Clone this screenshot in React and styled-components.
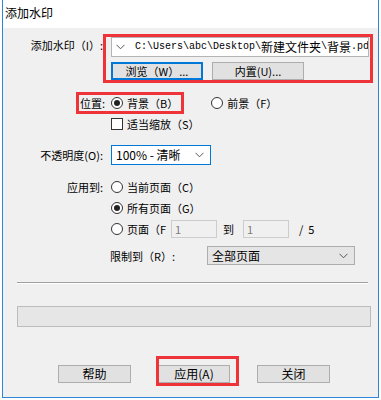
import React from 'react';
import styled, { createGlobalStyle } from 'styled-components';

const GlobalStyle = createGlobalStyle`
  html, body {
    margin: 0;
    padding: 0;
    background: #ffffff;
  }
  * {
    box-sizing: border-box;
  }
`;

const Page = styled.div`
  width: 381px;
  height: 400px;
  padding: 0 2px;
  background: #ffffff;
  font-family: "Noto Sans CJK SC", "Noto Sans", sans-serif;
  font-size: 11px;
  color: #000;
`;

const Window = styled.div`
  width: 377px;
  height: 398px;
  border: 1px solid #2b88d8;
  border-top: none;
  display: flex;
  flex-direction: column;
`;

const TitleBar = styled.div`
  height: 28px;
  flex: none;
  background: #ffffff;
  display: flex;
  align-items: center;
  padding: 0 0 2px 2px;
  font-size: 12px;
  line-height: 14px;
`;

const Body = styled.div`
  flex: 1;
  background: #f0f0f0;
  display: flex;
  flex-direction: column;
`;

const Row = styled.div`
  display: flex;
  align-items: ${p => p.$align || 'center'};
  margin-top: ${p => p.$top || 0}px;
  padding-left: ${p => p.$indent || 0}px;
  height: ${p => (p.$h ? `${p.$h}px` : 'auto')};
  line-height: 16px;
  white-space: nowrap;
`;

const Label = styled.div`
  width: ${p => p.$w || 100}px;
  flex: none;
  text-align: ${p => p.$left ? 'left' : 'right'};
  padding-top: ${p => p.$pt || 0}px;
  line-height: 16px;
  margin-right: ${p => p.$mr || 0}px;
`;

const Mark = styled.div`
  border: 3px solid #ee3339;
  padding: ${p => p.$pad};
  flex: none;
`;

const MarkedBox = styled(Mark)`
  width: 270px;
`;

const Combo = styled.div`
  width: 258px;
  height: 20px;
  background: #ffffff;
  border: 1px solid #b4b4b4;
  display: flex;
  align-items: center;
  padding-left: 4px;
  overflow: hidden;
  white-space: nowrap;
`;

const ComboArrow = styled.svg`
  width: 9px;
  height: 6px;
  flex: none;
  margin-right: 10px;
`;

const Mono = styled.span`
  font-family: "Liberation Mono", monospace;
  font-size: 10px;
`;

const Wide = styled.span`
  font-size: 12px;
`;

const ButtonRow = styled.div`
  display: flex;
  gap: ${p => p.$gap || 9}px;
  margin-top: 5px;
`;

const Button = styled.div`
  position: relative;
  width: ${p => p.$w || 92}px;
  height: 18px;
  flex: none;
  background: #e1e1e1;
  border: ${p => p.$focus ? '2px solid #0078d7' : '1px solid #adadad'};
  display: flex;
  align-items: center;
  justify-content: center;
  line-height: 14px;
  font-size: ${p => p.$fs || 11}px;
  ${p => p.$marked && `
    &::after {
      content: '';
      position: absolute;
      top: -10px;
      left: -3px;
      right: -10px;
      bottom: -4px;
      border: 3px solid #ee3339;
    }
  `}
`;

const Choice = styled.div`
  display: flex;
  align-items: center;
  flex: none;
  margin-left: ${p => p.$ml || 0}px;
`;

const Radio = styled.span`
  width: 12px;
  height: 12px;
  border-radius: 50%;
  border: 1px solid #333333;
  background: #ffffff;
  flex: none;
  display: flex;
  align-items: center;
  justify-content: center;
  margin-right: 4px;
  &::after {
    content: '';
    width: 6px;
    height: 6px;
    border-radius: 50%;
    background: ${p => p.$on ? '#222222' : 'transparent'};
  }
`;

const Check = styled.span`
  width: 12px;
  height: 12px;
  border: 1px solid #333333;
  background: #ffffff;
  flex: none;
  margin-right: 4px;
`;

const Select = styled.div`
  width: ${p => p.$w}px;
  height: ${p => p.$h || 20}px;
  flex: none;
  background: ${p => p.$gray ? '#e5e5e5' : '#ffffff'};
  border: 1px solid ${p => p.$gray ? '#adadad' : '#0078d7'};
  display: flex;
  align-items: center;
  justify-content: space-between;
  padding: 0 6px 0 4px;
  font-size: 12px;
`;

const Field = styled.div`
  width: 46px;
  height: 18px;
  flex: none;
  border: 1px solid #cccccc;
  background: #f0f0f0;
  color: #7a7a7a;
  padding-left: 3px;
  display: flex;
  align-items: center;
`;

const Clip = styled.span`
  width: ${p => p.$w}px;
  overflow: hidden;
  flex: none;
`;

const Text = styled.span`
  margin: ${p => p.$m || '0'};
  flex: none;
`;

const Separator = styled.div`
  margin: ${p => p.$top}px 0 0 14px;
  width: 351px;
  height: 2px;
  border-top: 1px solid #a0a0a0;
  border-bottom: 1px solid #ffffff;
`;

const Progress = styled.div`
  margin: 22px 0 0 14px;
  width: 354px;
  height: 21px;
  background: #e6e6e6;
  border: 1px solid #bcbcbc;
`;

const Footer = styled.div`
  display: flex;
  align-items: flex-start;
  gap: 27px;
  padding-left: 55px;
  margin-top: 38px;
`;

const DropArrow = styled(ComboArrow)`
  margin-right: 0;
`;

const Chevron = ({ as }) => (
  <ComboArrow as={as} viewBox="0 0 9 6">
    <path d="M0.5 0.8 L4.5 4.8 L8.5 0.8" fill="none" stroke="#555" strokeWidth="1" />
  </ComboArrow>
);

const DropChevron = () => (
  <DropArrow viewBox="0 0 9 6">
    <path d="M0.5 0.8 L4.5 4.8 L8.5 0.8" fill="none" stroke="#555" strokeWidth="1" />
  </DropArrow>
);

export default function App() {
  return (
    <>
      <GlobalStyle />
      <Page>
        <Window>
          <TitleBar>添加水印</TitleBar>
          <Body>
            <Row $align="flex-start" $top={6}>
              <Label $pt={3}>添加水印（I）:</Label>
              <MarkedBox $pad="0 1px 0 5px">
                <Combo>
                  <Chevron />
                  <Mono>{'C:\\Users\\abc\\Desktop\\'}</Mono>
                  <Wide>新建文件夹</Wide>
                  <Mono>{'\\'}</Mono>
                  <Wide>背景</Wide>
                  <Mono>.pdf</Mono>
                </Combo>
                <ButtonRow>
                  <Button $focus>浏览（W）...</Button>
                  <Button>内置(U)...</Button>
                </ButtonRow>
              </MarkedBox>
            </Row>

            <Row $top={9} $indent={73}>
              <Mark $pad="0 3px 0 1px">
                <Row $h={16}>
                  <Label $w={31} $left>位置:</Label>
                  <Choice>
                    <Radio $on />
                    背景（B）
                  </Choice>
                </Row>
              </Mark>
              <Choice $ml={27}>
                <Radio />
                前景（F）
              </Choice>
            </Row>

            <Row $top={3} $indent={108} $h={14}>
              <Choice>
                <Check />
                适当缩放（S）
              </Choice>
            </Row>

            <Row $top={14}>
              <Label $mr={8}>不透明度(O):</Label>
              <Select $w={100}>
                100% - 清晰
                <DropChevron />
              </Select>
            </Row>

            <Row $top={14} $h={16}>
              <Label $mr={8}>应用到:</Label>
              <Choice>
                <Radio />
                当前页面（C）
              </Choice>
            </Row>

            <Row $top={5} $indent={108} $h={16}>
              <Choice>
                <Radio $on />
                所有页面（G）
              </Choice>
            </Row>

            <Row $top={4} $indent={108} $h={18}>
              <Choice>
                <Radio />
                <Clip $w={44}>页面（F</Clip>
              </Choice>
              <Field>1</Field>
              <Text $m="0 9px 0 6px">到</Text>
              <Field>1</Field>
              <Text $m="0 0 0 10px">/&nbsp;&nbsp;5</Text>
            </Row>

            <Row $top={8} $indent={107}>
              <Label $w={97} $left>限制到（R）:</Label>
              <Select $w={148} $h={19} $gray>
                全部页面
                <DropChevron />
              </Select>
            </Row>

            <Separator $top={17} />
            <Progress />

            <Footer>
              <Button $w={73} $fs={12}>帮助</Button>
              <Button $w={72} $fs={12} $marked>应用(A)</Button>
              <Button $w={73} $fs={12}>关闭</Button>
            </Footer>
          </Body>
        </Window>
      </Page>
    </>
  );
}
